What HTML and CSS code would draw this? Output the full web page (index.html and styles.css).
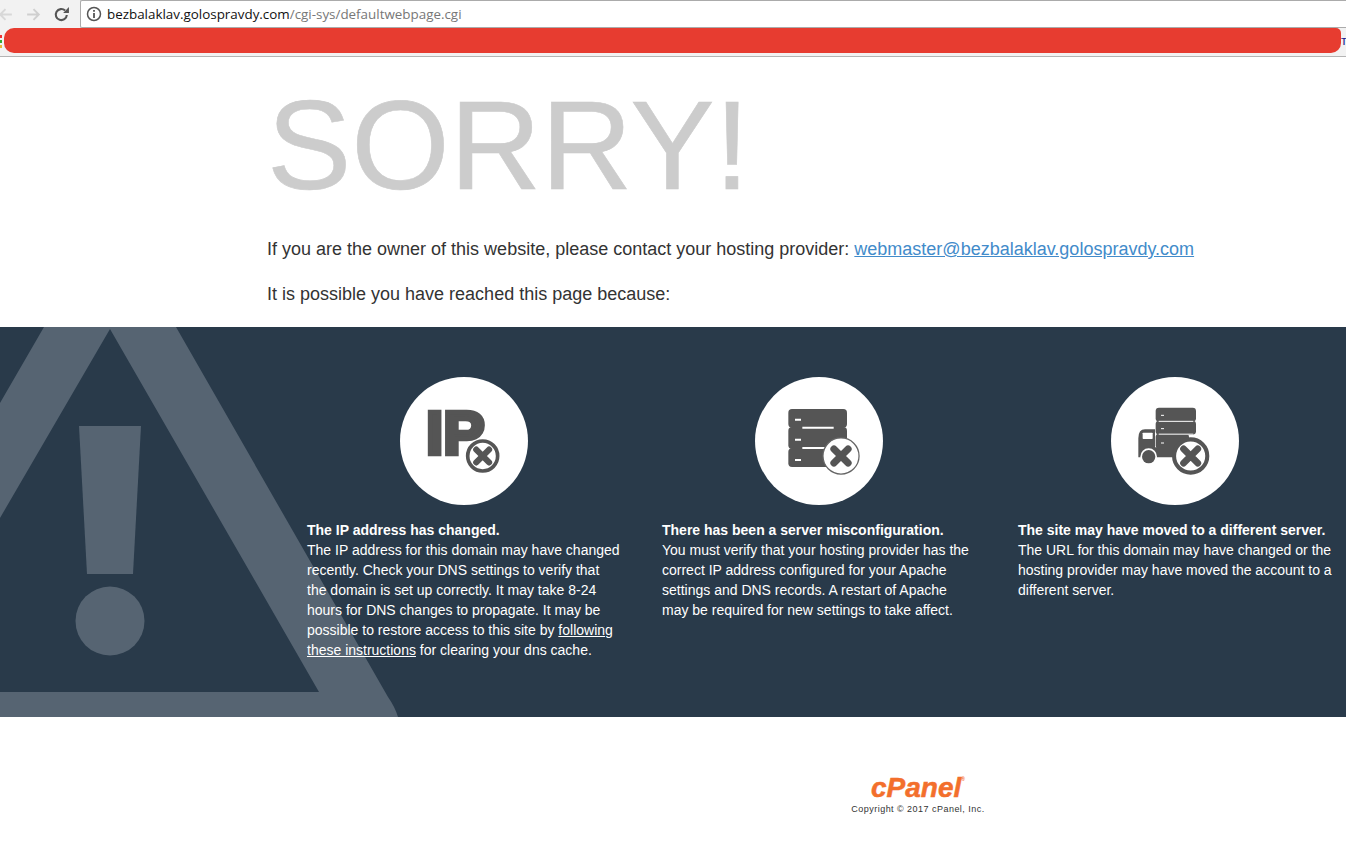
FILE: index.html
```html
<!DOCTYPE html>
<html lang="en">
<head>
<meta charset="utf-8">
<title>Sorry!</title>
<link rel="stylesheet" href="styles.css">
</head>
<body>
<svg class="defs" width="0" height="0" aria-hidden="true">
  <symbol id="badge" viewBox="0 0 120 120">
    <circle cx="60" cy="60" r="49" fill="#fff" stroke="#555" stroke-width="12"/>
    <path d="M39 39 L81 81 M81 39 L39 81" stroke="#555" stroke-width="20" stroke-linecap="round"/>
  </symbol>
  <symbol id="badge-thin" viewBox="0 0 120 120">
    <circle cx="60" cy="60" r="56" fill="#fff" stroke="#666" stroke-width="4"/>
    <circle cx="60" cy="60" r="48" fill="#fff"/>
    <path d="M38 38 L82 82 M82 38 L38 82" stroke="#555" stroke-width="22" stroke-linecap="round"/>
  </symbol>
</svg>
<header class="browser">
  <div class="toolbar">
    <div class="nav">
      <svg class="nav-icon back" viewBox="0 0 16 16"><path d="M14 8H3M8 3L3 8l5 5" fill="none" stroke="#d8d8d8" stroke-width="1.800"/></svg>
      <svg class="nav-icon forward" viewBox="0 0 16 16"><path d="M2 8h11M8 3l5 5-5 5" fill="none" stroke="#cfcfcf" stroke-width="1.800"/></svg>
      <svg class="nav-icon reload" viewBox="0 0 16 16"><path d="M13 8.500A5.200 5.200 0 1 1 11.400 4.300" fill="none" stroke="#555" stroke-width="2"/><path d="M9.500 6.500H15V1z" fill="#555"/></svg>
    </div>
    <div class="omnibox">
      <svg class="info" viewBox="0 0 16 16"><circle cx="8" cy="8" r="6.500" fill="none" stroke="#555" stroke-width="1.500"/><path d="M8 7v5M8 4v1.800" stroke="#555" stroke-width="1.800"/></svg>
      <span class="host">bezbalaklav.golospravdy.com</span><span class="path">/cgi-sys/defaultwebpage.cgi</span>
    </div>
  </div>
  <div class="bookmarks">
    <span class="favicon"></span>
    <span class="redaction"></span>
    <span class="bookmark-tail">тр</span>
  </div>
</header>
<main>
  <section class="intro">
    <h1>SORRY!</h1>
    <p class="lead">If you are the owner of this website, please contact your hosting provider: <a href="#">webmaster@bezbalaklav.golospravdy.com</a></p>
    <p class="lead">It is possible you have reached this page because:</p>
  </section>
  <section class="band">
    <svg class="watermark" viewBox="0 0 400 390" aria-hidden="true">
      <path fill-rule="evenodd" fill="#566472" d="M44 0H176L388 370Q395 380 398 390H0V76ZM110 2L0 191V365H319Z"/>
      <path fill="#566472" d="M79 99H141L133 247H87Z"/>
      <circle cx="110" cy="294" r="34.500" fill="#566472"/>
    </svg>
    <div class="columns">
      <article class="col">
        <div class="disc">
          <svg class="glyph" viewBox="30 21 384 384">
            <text class="ip-text" x="108" y="253" textLength="176" lengthAdjust="spacingAndGlyphs">IP</text>
            <use href="#badge" x="223" y="203" width="110" height="110"/>
          </svg>
        </div>
        <p><strong>The IP address has changed.</strong><br>The IP address for this domain may have changed recently. Check your DNS settings to verify that the domain is set up correctly. It may take 8-24 hours for DNS changes to propagate. It may be possible to restore access to this site by <a href="#">following these instructions</a> for clearing your dns cache.</p>
      </article>
      <article class="col">
        <div class="disc">
          <svg class="glyph" viewBox="30 21 384 384">
            <rect x="130" y="117" width="176" height="56" rx="11" fill="#555"/>
            <rect x="130" y="171" width="176" height="66" rx="11" fill="#555"/>
            <rect x="130" y="235" width="150" height="56" rx="11" fill="#555"/>
            <path d="M172 173.500H266M172 234H266M150 149H168M150 209H168M150 270H168" stroke="#fff" stroke-width="6"/>
            <use href="#badge-thin" x="230" y="200" width="116" height="116"/>
          </svg>
        </div>
        <p><strong>There has been a server misconfiguration.</strong><br>You must verify that your hosting provider has the correct IP address configured for your Apache settings and DNS records. A restart of Apache may be required for new settings to take affect.</p>
      </article>
      <article class="col">
        <div class="disc">
          <svg class="glyph" viewBox="33 21 384 384">
            <rect x="167" y="113" width="121" height="42" rx="10" fill="#555"/>
            <rect x="167" y="152" width="121" height="42" rx="10" fill="#555"/>
            <rect x="167" y="191" width="100" height="45" rx="10" fill="#555"/>
            <path d="M176 154H280M176 192.500H280M183 136H192M183 176H192M183 219H192" stroke="#fff" stroke-width="3"/>
            <path fill="#555" d="M115 262V205Q115 178 135 178H165V232H240V262Z"/>
            <rect x="128" y="188" width="30" height="19" rx="2" fill="#fff"/>
            <circle cx="146" cy="260" r="25" fill="#fff"/>
            <circle cx="146" cy="260" r="20" fill="#555"/>
            <use href="#badge" x="211" y="197" width="122" height="122"/>
          </svg>
        </div>
        <p><strong>The site may have moved to a different server.</strong><br>The URL for this domain may have changed or the hosting provider may have moved the account to a different server.</p>
      </article>
    </div>
  </section>
  <footer class="brand">
    <div class="logo">cPanel<sup>®</sup></div>
    <div class="copyright">Copyright © 2017 cPanel, Inc.</div>
  </footer>
</main>
</body>
</html>
```
FILE: styles.css
```css
* { box-sizing: border-box; }
html, body { margin: 0; padding: 0; }
body {
  width: 1346px;
  height: 858px;
  overflow: hidden;
  background: #fff;
  font-family: "Liberation Sans", Arial, sans-serif;
  color: #333;
}
.defs { position: absolute; }

/* browser chrome */
.browser { height: 57px; background: #f2f2f2; border-bottom: 1px solid #b4b4b4; }
.toolbar { display: flex; height: 28px; }
.nav { width: 80px; display: flex; align-items: center; flex: none; padding-top: 1px; }
.nav-icon { width: 17px; height: 17px; flex: none; }
.back { margin-left: -3px; }
.forward { margin-left: 11px; }
.reload { margin-left: 11px; }
.omnibox {
  flex: 1;
  display: flex;
  align-items: center;
  background: #fff;
  border: 1px solid #ababab;
  border-right: 0;
  border-radius: 2px 0 0 2px;
  padding-left: 5px;
  font-family: "Open Sans", sans-serif;
  font-size: 13.400px;
  white-space: nowrap;
}
.info { width: 16px; height: 16px; margin-right: 5px; flex: none; }
.host { color: #111; }
.path { color: #777; }
.bookmarks { display: flex; height: 25px; align-items: center; overflow: hidden; }
.favicon {
  width: 4px;
  height: 14px;
  align-self: flex-start;
  margin-top: 7px;
  flex: none;
  background: linear-gradient(#e33 0 3px, transparent 3px 5px, #3a3 5px 8px, transparent 8px 10px, #e8b83a 10px 13px, transparent 13px) no-repeat 0 0 / 2px 14px;
}
.redaction { width: 1337px; height: 25px; flex: none; background: #e73c30; border-radius: 10px 5px 10px 10px; }
.bookmark-tail { margin-left: 0; font-size: 13px; color: #1a1a8e; white-space: nowrap; }

/* intro */
.intro { height: 270px; padding: 13px 0 0 267px; }
h1 {
  margin: 0;
  font-size: 126.500px;
  line-height: 150px;
  font-weight: 400;
  color: #ccc;
  -webkit-text-stroke: .6px #ccc;
}
.lead { margin: 0; font-size: 18px; line-height: 25px; color: #333; }
h1 + .lead { margin-top: 17px; }
.lead + .lead { margin-top: 20px; }
.lead a { color: #428bca; }

/* band */
.band { position: relative; height: 390px; background: #293a4a; overflow: hidden; }
.watermark { position: absolute; left: 0; top: 0; width: 400px; height: 390px; }
.columns {
  position: relative;
  display: grid;
  grid-template-columns: 355px 356px 355px;
  margin-left: 287px;
  padding-top: 50px;
}
.col { padding: 0 0 0 20px; }
.disc {
  width: 128px;
  height: 128px;
  margin-left: 93px;
  border-radius: 50%;
  background: #fff;
}
.glyph { display: block; width: 128px; height: 128px; }
.ip-text {
  font-family: "Liberation Sans", sans-serif;
  font-weight: 700;
  font-size: 186px;
  fill: #555;
  stroke: #555;
  stroke-width: 14px;
}
.col p { margin: 15px 0 0; width: 315px; font-size: 14px; line-height: 20px; color: #fff; }
.col a { color: #fff; }

/* footer */
.brand { padding: 55px 0 0 851px; width: 985px; text-align: center; }
.logo {
  font-size: 28px;
  line-height: 31px;
  font-weight: 700;
  font-style: italic;
  color: #f36f2c;
  letter-spacing: 0;
  -webkit-text-stroke: .5px #f36f2c;
}
.logo sup { font-size: 5px; vertical-align: 16px; line-height: 0; font-style: normal; -webkit-text-stroke: 0; }
.copyright { font-size: 9px; line-height: 12px; color: #333; letter-spacing: .47px; white-space: nowrap; }
```
